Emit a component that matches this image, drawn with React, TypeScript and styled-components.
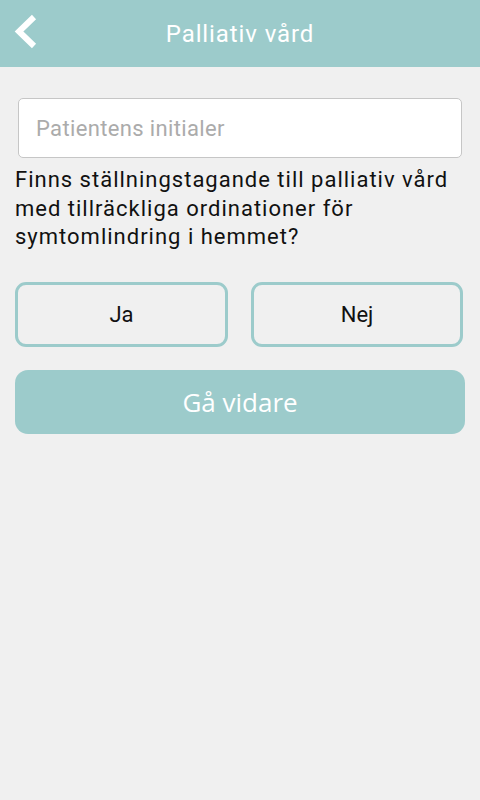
import React from 'react'
import styled, { createGlobalStyle } from 'styled-components'

const teal = '#9ccbcb'

const GlobalStyle = createGlobalStyle`
  html, body {
    margin: 0;
    padding: 0;
    background: #f0f0f0;
    font-family: Roboto, "Liberation Sans", sans-serif;
  }
`

export default function App() {
  return (
    <Page>
      <GlobalStyle />
      <Header>
        <BackButton aria-label="Tillbaka">
          <svg width="26" height="36" viewBox="0 0 26 36">
            <path d="M20 3 L5 17.5 L20 32" fill="none" stroke="#fff" strokeWidth="6" strokeLinejoin="miter" strokeLinecap="butt" />
          </svg>
        </BackButton>
        <Title>Palliativ vård</Title>
      </Header>
      <Content>
        <Input placeholder="Patientens initialer" />
        <Question>
          Finns ställningstagande till palliativ vård med tillräckliga ordinationer för symtomlindring i hemmet?
        </Question>
        <Choices>
          <Choice>Ja</Choice>
          <Choice>Nej</Choice>
        </Choices>
        <NextButton>Gå vidare</NextButton>
      </Content>
    </Page>
  )
}

const Page = styled.div`
  min-height: 800px;
  background: #f0f0f0;
`

const Header = styled.header`
  position: relative;
  height: 67px;
  background: ${teal};
  display: flex;
  align-items: center;
  justify-content: center;
`

const BackButton = styled.button`
  position: absolute;
  left: 14px;
  top: 14px;
  padding: 0;
  border: none;
  background: none;
  display: flex;
`

const Title = styled.h1`
  margin: 0;
  color: #fff;
  font-weight: 400;
  font-size: 24px;
  letter-spacing: 0.9px;
  font-family: Roboto, "Liberation Sans", sans-serif;
`

const Content = styled.main`
  padding: 31px 15px 0 15px;
  display: flex;
  flex-direction: column;
`

const Input = styled.input`
  box-sizing: border-box;
  margin: 0 3px 0 3px;
  height: 60px;
  border: 1px solid #c6c6c6;
  border-radius: 5px;
  background: #fff;
  padding: 0 17px;
  font-size: 22px;
  letter-spacing: 0.35px;
  font-family: Roboto, "Liberation Sans", sans-serif;
  outline: none;
  &::placeholder {
    color: #ababab;
  }
`

const Question = styled.p`
  margin: 8px 0 0 0;
  font-size: 22px;
  letter-spacing: 1px;
  line-height: 28.5px;
  color: #111;
`

const Choices = styled.div`
  margin-top: 30px;
  display: grid;
  grid-template-columns: 213px 212px;
  justify-content: space-between;
  padding-right: 2px;
`

const Choice = styled.button`
  box-sizing: border-box;
  height: 65px;
  border: 3px solid ${teal};
  border-radius: 11px;
  background: #f0f0f0;
  font-size: 22px;
  font-family: Roboto, "Liberation Sans", sans-serif;
  color: #111;
  padding: 0;
`

const NextButton = styled.button`
  margin-top: 23px;
  height: 64px;
  border: none;
  border-radius: 13px;
  background: ${teal};
  color: #fff;
  font-size: 26px;
  font-family: "Open Sans", "Liberation Sans", sans-serif;
  padding: 0;
`
